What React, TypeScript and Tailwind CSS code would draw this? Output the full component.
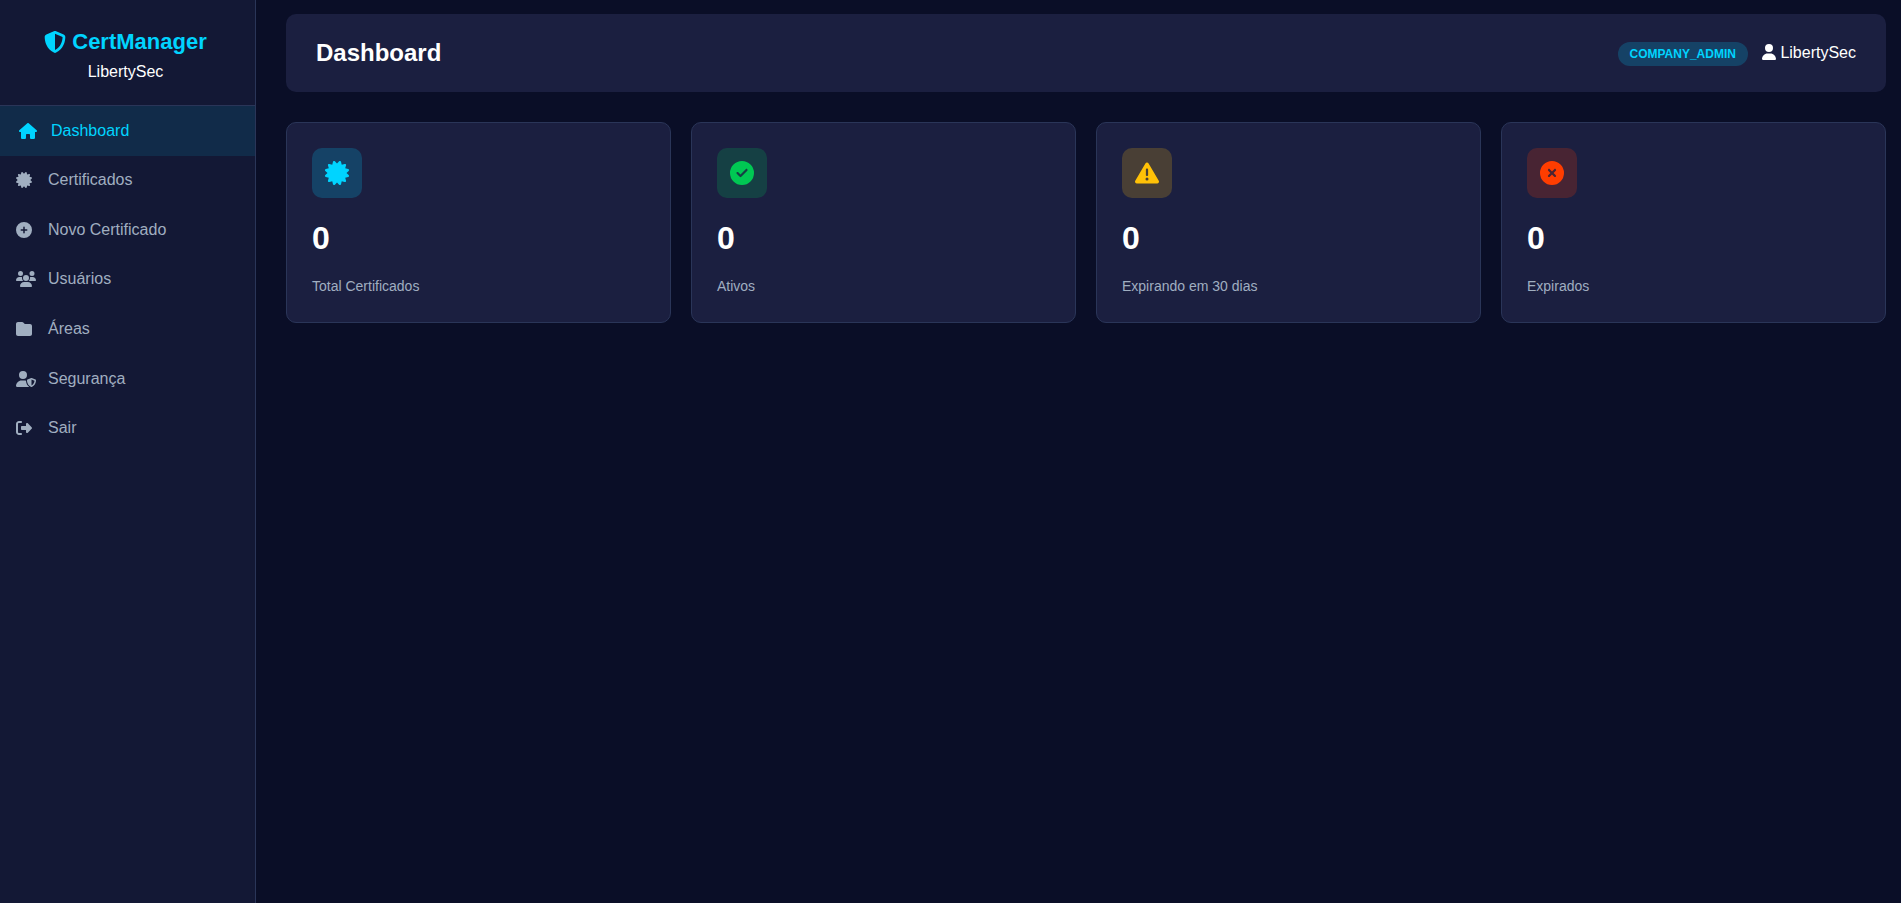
import {
  FaCertificate,
  FaCircleCheck,
  FaCirclePlus,
  FaCircleXmark,
  FaFolder,
  FaHouse,
  FaRightFromBracket,
  FaShieldHalved,
  FaTriangleExclamation,
  FaUser,
  FaUserShield,
  FaUsers,
} from "react-icons/fa6";

const menu = [
  { label: "Dashboard", icon: FaHouse, iconWidth: "w-[18px]", active: true },
  { label: "Certificados", icon: FaCertificate, iconWidth: "w-4" },
  { label: "Novo Certificado", icon: FaCirclePlus, iconWidth: "w-4" },
  { label: "Usuários", icon: FaUsers, iconWidth: "w-5" },
  { label: "Áreas", icon: FaFolder, iconWidth: "w-4" },
  { label: "Segurança", icon: FaUserShield, iconWidth: "w-5" },
  { label: "Sair", icon: FaRightFromBracket, iconWidth: "w-4" },
];

const stats = [
  { label: "Total Certificados", value: 0, icon: FaCertificate, color: "bg-[#00d4ff]/20 text-[#00d4ff]" },
  { label: "Ativos", value: 0, icon: FaCircleCheck, color: "bg-[#00c853]/20 text-[#00c853]" },
  { label: "Expirando em 30 dias", value: 0, icon: FaTriangleExclamation, color: "bg-[#ffc107]/20 text-[#ffc107]" },
  { label: "Expirados", value: 0, icon: FaCircleXmark, color: "bg-[#ff3d00]/20 text-[#ff3d00]" },
];

function Sidebar() {
  return (
    <aside className="w-64 shrink-0 bg-[#131835] border-r border-[#2a3558]">
      <div className="pt-6 pb-[22px] pr-1 border-b border-[#2a3558] text-center">
        <div className="flex items-center justify-center gap-1.5 text-[22px] leading-9 font-bold text-[#00d4ff]">
          <FaShieldHalved />
          CertManager
        </div>
        <div className="leading-[23px]">LibertySec</div>
      </div>
      <nav className="grid auto-rows-fr h-[347px]">
        {menu.map(({ label, icon: Icon, iconWidth, active }) => (
          <a
            key={label}
            href="#"
            className={
              active
                ? "flex items-center gap-3 pl-[19px] pr-4 bg-[#00d4ff]/10 text-[#00d4ff]"
                : "flex items-center gap-3 px-4 text-[#a0aec0]"
            }
          >
            <span className="w-5 shrink-0">
              <Icon className={`h-4 ${iconWidth}`} />
            </span>
            {label}
          </a>
        ))}
      </nav>
    </aside>
  );
}

function StatCard({ label, value, icon: Icon, color }: (typeof stats)[number]) {
  return (
    <div className="p-[25px] bg-[#1b1f40] border border-[#2a3558] rounded-[10px]">
      <div className={`flex items-center justify-center size-[50px] mb-[15px] rounded-[10px] text-2xl ${color}`}>
        <Icon />
      </div>
      <div className="mb-3 text-[32px] leading-[51px] font-bold">{value}</div>
      <div className="text-sm leading-[21px] text-[#a0aec0]">{label}</div>
    </div>
  );
}

export default function App() {
  return (
    <div className="flex min-h-screen bg-[#0a0e27] font-['Liberation_Sans',Arial,sans-serif] text-base text-white">
      <Sidebar />
      <main className="grow pt-3.5 pl-[30px] pr-[15px]">
        <header className="flex items-center justify-between mb-[30px] px-[30px] py-5 bg-[#1b1f40] rounded-[10px]">
          <h1 className="text-2xl leading-[38px] font-bold">Dashboard</h1>
          <div className="flex items-baseline gap-3.5">
            <span className="px-3 rounded-full bg-[#00d4ff]/20 text-xs leading-6 font-bold text-[#00d4ff]">
              COMPANY_ADMIN
            </span>
            <span>
              <FaUser className="inline h-4 w-3.5 align-[-2px]" /> LibertySec
            </span>
          </div>
        </header>
        <div className="grid grid-cols-4 gap-5">
          {stats.map((stat) => (
            <StatCard key={stat.label} {...stat} />
          ))}
        </div>
      </main>
    </div>
  );
}
